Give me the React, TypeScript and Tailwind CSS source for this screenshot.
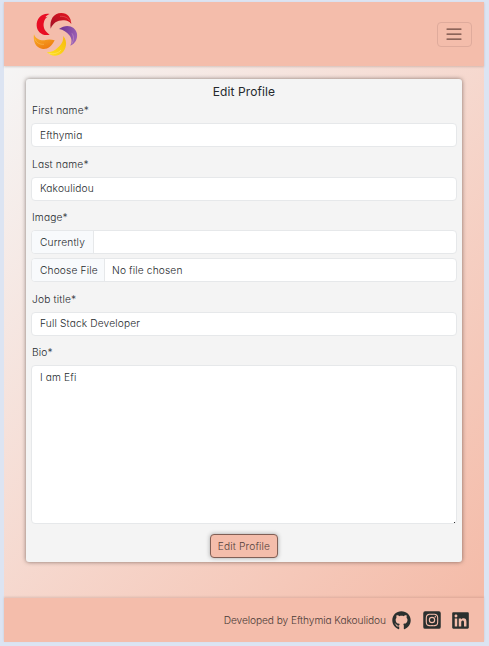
import type { ReactNode } from 'react';
import { FaGithub, FaInstagramSquare, FaLinkedin } from 'react-icons/fa';

function Logo() {
  return (
    <svg className="h-[45px] w-[45px]" viewBox="99 36 135 135" aria-label="Logo">
      <defs>
        <linearGradient id="crimson" x1="0" y1="1" x2="1" y2="0">
          <stop offset="0" stopColor="#9d1228" />
          <stop offset="1" stopColor="#e8141c" />
        </linearGradient>
        <linearGradient id="violet" x1="0" y1="0" x2="1" y2="0.4">
          <stop offset="0" stopColor="#68308f" />
          <stop offset="1" stopColor="#9a5fb4" />
        </linearGradient>
        <linearGradient id="gold" x1="1" y1="0" x2="0" y2="1">
          <stop offset="0" stopColor="#f6b90d" />
          <stop offset="1" stopColor="#ffe21f" />
        </linearGradient>
        <linearGradient id="amber" x1="0" y1="0" x2="0.5" y2="1">
          <stop offset="0" stopColor="#fbb52a" />
          <stop offset="1" stopColor="#ee7d11" />
        </linearGradient>
      </defs>
      <path fill="#e80e24" d="M149 42C126 38 109 55 110 77C111 96 128 109 149 104C136 96 129 84 131 70C133 58 137 53 143 50L136 52C140 46 144 44 149 42Z" />
      <path fill="url(#crimson)" d="M152 86C148 60 160 39 184 39C203 39 213 53 214 72C207 63 199 60 189 61C171 61 160 69 152 86Z" />
      <path stroke="#f08b83" strokeWidth="1.2" fill="none" d="M180 49C195 48 205 54 212 65" />
      <path fill="url(#violet)" d="M177 87C198 70 226 77 231 101C233 117 226 130 211 137C217 125 215 114 208 106C200 96 190 89 177 87Z" />
      <path stroke="#e4b5d0" strokeWidth="1.2" fill="none" d="M216 100C223 110 221 124 214 133" />
      <path fill="url(#gold)" d="M190 108C204 125 199 148 185 160C172 171 151 169 141 156C152 158 163 153 172 144C184 134 190 125 190 108Z" />
      <path stroke="#fff0a0" strokeWidth="1.2" fill="none" d="M147 160C162 164 175 159 183 150" />
      <path fill="url(#amber)" d="M102 103C107 116 119 122 133 121C145 118 153 118 164 121C155 139 144 148 129 147C110 146 98 127 102 103Z" />
      <path stroke="#ffd17c" strokeWidth="1.2" fill="none" d="M104 116C110 129 120 134 132 133" />
    </svg>
  );
}

function Label({ children }: { children: ReactNode }) {
  return <div className="h-[15px] pl-px leading-[15px] tracking-[0.16px]">{children}</div>;
}

const box = 'flex h-6 items-center rounded-[4px] border border-[#e6e8ea] bg-white';

function Field({ label, value }: { label: string; value: string }) {
  return (
    <div className="mb-[9.5px]">
      <Label>{label}</Label>
      <div className={`${box} mt-[5px] px-[8px]`}>{value}</div>
    </div>
  );
}

export default function App() {
  return (
    <div className="flex h-[646px] w-[489px] flex-col bg-[#dce4f2] pt-[2px] pr-[5px] pb-[4px] pl-[4px] font-['Inter',sans-serif] text-[10.2px] leading-[15px] font-light tracking-[0.14px] text-[#25292d] [font-feature-settings:'cv11']">
      <header className="z-10 flex h-[64px] shrink-0 items-center justify-between bg-[#f4bdab] pr-[12px] pl-[29px] shadow-[0_1px_2px_rgba(80,50,40,0.2)]">
        <Logo />
        <button aria-label="Menu" className="flex h-[25px] w-[35px] items-center justify-center rounded-[4px] border border-[#dfab9c]">
          <svg className="-ml-px" width="16" height="12" viewBox="0 0 16 12" stroke="#6a473f" strokeWidth="1.25" strokeLinecap="round">
            <path d="M1 1H15M1 6H15M1 11H15" />
          </svg>
        </button>
      </header>

      <main className="h-[532px] shrink-0 bg-linear-to-br from-[#f5f5f5] to-[#f4bba8] px-[22px] pt-[13px]">
        <section className="h-[483px] rounded-[3px] bg-[#f4f4f4] px-[5px] shadow-[0_0_4px_rgba(60,45,40,0.6)]">
          <h1 className="flex h-[24px] items-center justify-center text-[12px] font-normal tracking-[0.1px]">Edit Profile</h1>
          <Field label="First name*" value="Efthymia" />
          <Field label="Last name*" value="Kakoulidou" />
          <Label>Image*</Label>
          <div className={`${box} mt-[5px]`}>
            <span className="flex h-full w-[62px] items-center rounded-l-[3px] border-r border-[#e6e8ea] bg-[#f8fafc] pl-[8px]">Currently</span>
          </div>
          <div className={`${box} mt-[4px] mb-[9.5px]`}>
            <span className="flex h-full w-[73px] items-center rounded-l-[3px] border-r border-[#e6e8ea] bg-[#f8fafc] pl-[8px]">Choose File</span>
            <span className="ml-[7px]">No file chosen</span>
          </div>
          <Field label="Job title*" value="Full Stack Developer" />
          <Label>Bio*</Label>
          <div className="relative mt-[5px] h-[159px] rounded-[4px] border border-[#e6e8ea] bg-white px-[8px] pt-[4px]">
            I am Efi
            <span className="absolute right-[1px] bottom-0 h-px w-px bg-[#333]" />
          </div>
          <button className="mx-auto mt-[10px] flex h-[24px] w-[68px] items-center justify-center rounded-[4px] border border-[#805f56] bg-[#f4bdab] whitespace-nowrap text-[#55403b] shadow-[0_0_4px_rgba(50,50,50,0.4)]">
            Edit Profile
          </button>
        </section>
      </main>

      <footer className="z-10 flex h-[44px] shrink-0 items-center justify-end bg-[#f4bdab] pr-[14px] shadow-[0_-1px_2px_rgba(80,50,40,0.15)]">
        <span className="mr-[6px] tracking-[-0.08px] text-[#4a3a36]">Developed by Efthymia Kakoulidou</span>
        <FaGithub className="mr-[11px] size-[19px] text-[#2b302f]" />
        <FaInstagramSquare className="mr-[9px] size-[20px] text-[#2b302f]" />
        <FaLinkedin className="size-[19px] text-[#2b302f]" />
      </footer>
    </div>
  );
}
